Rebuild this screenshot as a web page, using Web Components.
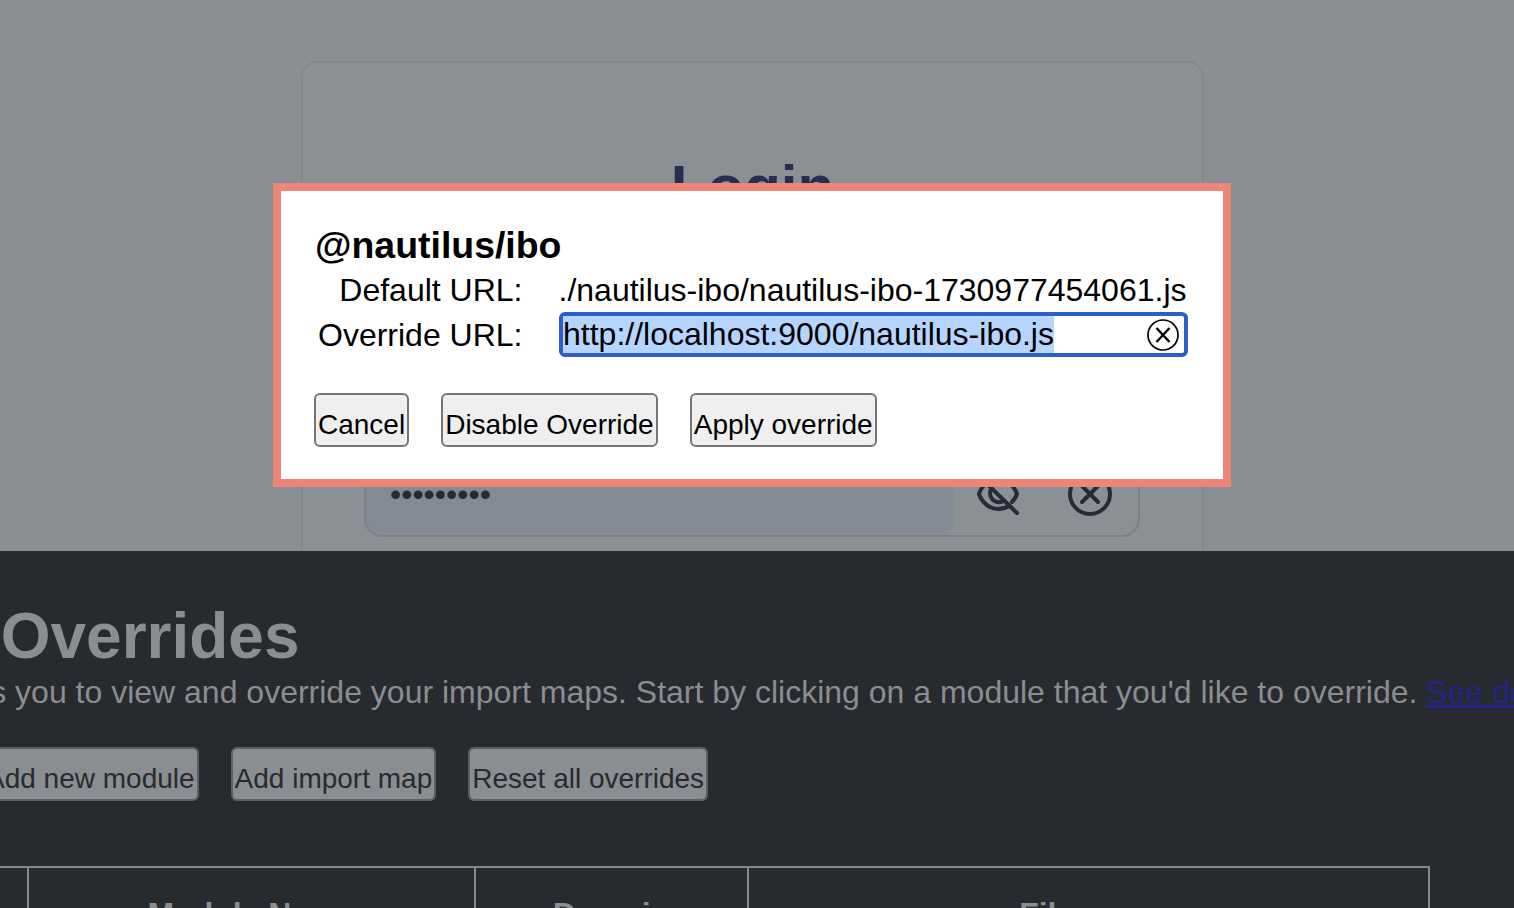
<!DOCTYPE html>
<html lang="en">
<head>
<meta charset="utf-8">
<title>Import Map Overrides</title>
<style>
  html, body { margin: 0; height: 908px; overflow: hidden; background: #8b8e92; font-family: "Liberation Sans", Arial, sans-serif; }
  body { display: flex; flex-direction: column; position: relative; }
</style>
</head>
<body>
  <login-card></login-card>
  <overrides-panel></overrides-panel>
  <override-dialog module-name="@nautilus/ibo" default-url="./nautilus-ibo/nautilus-ibo-1730977454061.js" override-url="http://localhost:9000/nautilus-ibo.js"></override-dialog>

<script>
"use strict";
(() => {
  var FlatButton = class extends HTMLElement {
    constructor() {
      super();
      this.attachShadow({ mode: "open" });
      this.shadowRoot.innerHTML = `<style>
        :host { display: block; flex: none; }
        div {
          box-sizing: border-box;
          height: 54px;
          padding: 14px 2px 0;
          border: 2px solid var(--btn-border, #767676);
          border-radius: 6px;
          background: var(--btn-bg, #efefef);
          color: var(--btn-color, #000);
          font: 28px/32px "Liberation Sans", Arial, sans-serif;
          white-space: nowrap;
        }
      </style><div><slot></slot></div>`;
    }
  };
  customElements.define("flat-button", FlatButton);

  var LoginCard = class extends HTMLElement {
    constructor() {
      super();
      this.attachShadow({ mode: "open" });
      this.shadowRoot.innerHTML = `<style>
        :host { display: block; flex: none; height: 551px; overflow: hidden; }
        .card {
          box-sizing: border-box;
          width: 903px;
          height: 640px;
          margin: 61px 0 0 301px;
          padding-top: 89px;
          border: 2px solid #85888c;
          border-radius: 16px;
          background: #8c8f93;
        }
        h1 {
          margin: 0;
          text-align: center;
          color: #272f4f;
          font: bold 60px/69px "Liberation Sans", Arial, sans-serif;
        }
        .field {
          box-sizing: border-box;
          display: flex;
          width: 776px;
          height: 87px;
          margin: 229px 0 0 61px;
          border: 2px solid #7c7f84;
          border-radius: 18px;
        }
        .value {
          box-sizing: border-box;
          width: 588px;
          padding: 24px 0 0 24px;
          border-radius: 16px 0 16px 16px;
          background: #838a94;
          color: #272a2f;
          font: 32px/37px "Liberation Sans", Arial, sans-serif;
        }
        .icons { display: flex; align-items: flex-start; gap: 48px; padding: 20px 0 0 22px; }
        svg { display: block; width: 44px; height: 44px; fill: none; stroke: #272b38; stroke-width: 4; stroke-linecap: round; stroke-linejoin: round; }
      </style>
      <section class="card">
        <h1>Login</h1>
        <div class="field">
          <div class="value">•••••••••</div>
          <div class="icons">
            <svg viewBox="0 0 44 44">
              <path d="M5 6 41 41"/>
              <path d="M11 11C7 14 4 18 3 22c3 9 11 15 19 15 4 0 8-1 11-3"/>
              <path d="M20 7c1 0 1 0 2 0 8 0 16 6 19 15-1 3-3 6-5 8"/>
              <path d="M15 17c-2 3-1 8 2 11 3 2 7 3 10 1"/>
            </svg>
            <svg viewBox="0 0 44 44">
              <circle cx="22" cy="22" r="20"/>
              <path d="M14 14 30 30M30 14 14 30"/>
            </svg>
          </div>
        </div>
      </section>`;
    }
  };
  customElements.define("login-card", LoginCard);

  var OverridesPanel = class extends HTMLElement {
    constructor() {
      super();
      this.attachShadow({ mode: "open" });
      this.shadowRoot.innerHTML = `<style>
        :host {
          display: block;
          flex: 1;
          min-height: 0;
          overflow: hidden;
          background: #272a2f;
          color: #8a8d92;
          font-family: "Liberation Sans", Arial, sans-serif;
          white-space: nowrap;
          --btn-bg: #8a8d92;
          --btn-border: #5c5f64;
          --btn-color: #272a2f;
        }
        h1 { margin: 48px 0 0 -362px; font: bold 64px/74px "Liberation Sans", Arial, sans-serif; }
        p { margin: 1px 0 0 -362px; font: 32px/37px "Liberation Sans", Arial, sans-serif; }
        a { color: #23238a; text-decoration: underline; }
        .actions { display: flex; gap: 32px; margin: 36px 0 0 -18px; }
        .table {
          display: grid;
          grid-template-columns: 289px 447px 273px 681px;
          width: 1690px;
          margin: 65px 0 0 -260px;
          border-top: 2px solid #85888c;
        }
        .table div {
          box-sizing: border-box;
          height: 80px;
          padding-top: 28px;
          border-right: 2px solid #85888c;
          text-align: center;
          font: bold 32px/37px "Liberation Sans", Arial, sans-serif;
        }
      </style>
      <h1>Import Map Overrides</h1>
      <p>This developer tool allows you to view and override your import maps. Start by clicking on a module that you'd like to override. <a href="#">See documentation for more details</a>.</p>
      <div class="actions">
        <flat-button>Add new module</flat-button>
        <flat-button>Add import map</flat-button>
        <flat-button>Reset all overrides</flat-button>
      </div>
      <div class="table">
        <div>Module Status</div>
        <div>Module Name</div>
        <div>Domain</div>
        <div>Filename</div>
      </div>`;
    }
  };
  customElements.define("overrides-panel", OverridesPanel);

  var OverrideDialog = class extends HTMLElement {
    constructor() {
      super();
      this.attachShadow({ mode: "open" });
    }
    connectedCallback() {
      this.shadowRoot.innerHTML = `<style>
        :host {
          display: block;
          position: absolute;
          left: 273px;
          top: 183px;
          box-sizing: border-box;
          width: 958px;
          height: 304px;
          padding: 33px 33px 0;
          border: 8px solid #ee8677;
          background: #fff;
          color: #000;
          font: 32px/37px "Liberation Sans", Arial, sans-serif;
        }
        h3 { margin: 0 0 0 1px; font: bold 37.44px/43px "Liberation Sans", Arial, sans-serif; }
        .rows {
          display: grid;
          grid-template-columns: 208.5px 628px;
          column-gap: 36px;
          row-gap: 3px;
          align-items: center;
          margin-top: 5px;
        }
        .rows label { text-align: right; }
        .rows .second { margin-top: 2px; }
        .url { white-space: nowrap; height: 37px; }
        .input {
          box-sizing: border-box;
          display: flex;
          align-items: center;
          justify-content: space-between;
          height: 45px;
          margin: 0 -1px 0 0.5px;
          padding-right: 5px;
          border: 4px solid #2a5fc8;
          border-radius: 6px;
        }
        .input span { background: #b5d5fe; white-space: nowrap; }
        .input svg { display: block; width: 32px; height: 32px; fill: none; stroke: #000; stroke-width: 1.7; }
        .actions { display: flex; gap: 32px; margin-top: 36px; }
      </style>
      <h3>${this.getAttribute("module-name")}</h3>
      <div class="rows">
        <label>Default URL:</label>
        <div class="url">${this.getAttribute("default-url")}</div>
        <label class="second">Override URL:</label>
        <div class="input">
          <span>${this.getAttribute("override-url")}</span>
          <svg viewBox="0 0 32 32">
            <circle cx="16" cy="16" r="15"/>
            <path d="M9.5 9 22.5 23M22.5 9 9.5 23" stroke-width="2.4"/>
          </svg>
        </div>
      </div>
      <div class="actions">
        <flat-button>Cancel</flat-button>
        <flat-button>Disable Override</flat-button>
        <flat-button>Apply override</flat-button>
      </div>`;
    }
  };
  customElements.define("override-dialog", OverrideDialog);
})();
</script>
</body>
</html>
